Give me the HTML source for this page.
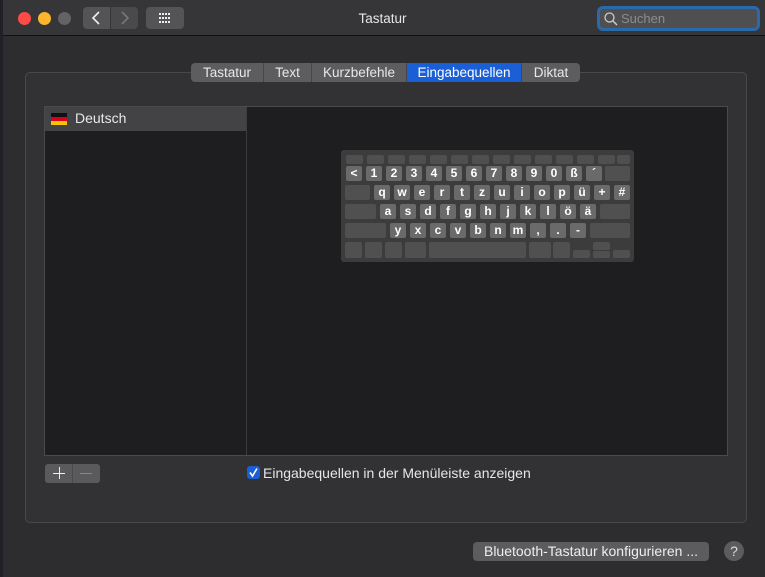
<!DOCTYPE html>
<html><head><meta charset="utf-8"><style>
*{margin:0;padding:0;box-sizing:border-box}
body{width:765px;height:577px;background:#1f2127;font-family:"Liberation Sans",sans-serif;position:relative;overflow:hidden;color:#e0e0e0}
.a{position:absolute}
#win{left:3px;top:0;width:762px;height:577px;background:#2d2d2f}
#title{left:3px;top:0;width:762px;height:36px;background:#363638;border-bottom:1px solid #111}
.dot{width:13px;height:13px;border-radius:50%;top:12px}
.btn{background:#545456;border-radius:4px}
.tab{top:63px;height:19px;background:#5d5d5f;color:#e8e8e8;font-size:13.5px;line-height:19px;text-align:center;border-right:1px solid #47474a}
.k{position:absolute;background:#6a6a6a;border-radius:2px;color:#fff;font-weight:bold;font-size:12px;text-align:center;line-height:15px;width:16px;height:15px}
.p{position:absolute;background:#505050;border-radius:2px}
.f{position:absolute;background:#4f4f4f;border-radius:2px;top:5px;height:9px;width:17px}
</style></head><body>
<div class="a" id="win"></div>
<div class="a" id="title"></div>
<div class="a dot" style="left:18px;background:#fe4b45"></div>
<div class="a dot" style="left:38px;background:#fcb52d"></div>
<div class="a dot" style="left:58px;background:#636366"></div>
<div class="a btn" style="left:83px;top:7px;width:27px;height:22px;border-radius:4px 0 0 4px"></div>
<div class="a btn" style="left:111px;top:7px;width:27px;height:22px;border-radius:0 4px 4px 0;background:#4a4a4c"></div>
<svg class="a" style="left:83px;top:7px" width="55" height="22"><path d="M16 5 L10 11 L16 17" stroke="#eee" stroke-width="1.6" fill="none"/><path d="M39 5 L45 11 L39 17" stroke="#777" stroke-width="1.6" fill="none"/></svg>
<div class="a btn" style="left:146px;top:7px;width:38px;height:22px"></div>
<svg class="a" style="left:146px;top:7px" width="38" height="22"><g fill="#eee"><rect x="13" y="6" width="2" height="2"/><rect x="16" y="6" width="2" height="2"/><rect x="19" y="6" width="2" height="2"/><rect x="22" y="6" width="2" height="2"/><rect x="13" y="10" width="2" height="2"/><rect x="16" y="10" width="2" height="2"/><rect x="19" y="10" width="2" height="2"/><rect x="22" y="10" width="2" height="2"/><rect x="13" y="14" width="2" height="2"/><rect x="16" y="14" width="2" height="2"/><rect x="19" y="14" width="2" height="2"/><rect x="22" y="14" width="2" height="2"/></g></svg>
<div class="a" style="left:0;width:765px;top:11px;text-align:center;font-size:13.5px;color:#e6e6e6">Tastatur</div>
<div class="a" style="left:597px;top:6px;width:163px;height:25px;border:3px solid #2a6aa8;border-radius:6px;background:#4f4f51"></div>
<svg class="a" style="left:603px;top:11px" width="16" height="16"><circle cx="6.5" cy="6.5" r="4.5" stroke="#ccc" stroke-width="1.3" fill="none"/><path d="M10 10 L14 14" stroke="#ccc" stroke-width="1.5"/></svg>
<div class="a" style="left:621px;top:11px;font-size:13px;color:#8c8c8c">Suchen</div>

<div class="a" style="left:25px;top:72px;width:722px;height:451px;border:1px solid #48484a;border-radius:5px;background:#323234"></div>
<div class="a tab" style="left:191px;width:73px;border-radius:4px 0 0 4px">Tastatur</div>
<div class="a tab" style="left:264px;width:48px">Text</div>
<div class="a tab" style="left:312px;width:95px">Kurzbefehle</div>
<div class="a tab" style="left:407px;width:115px;background:#1a5fd6;color:#fff">Eingabequellen</div>
<div class="a tab" style="left:522px;width:58px;border-radius:0 4px 4px 0;border:none">Diktat</div>

<div class="a" style="left:44px;top:106px;width:684px;height:350px;border:1px solid #4a4a4c;background:#1e1e20"></div>
<div class="a" style="left:246px;top:107px;width:1px;height:348px;background:#3c3c3e"></div>
<div class="a" style="left:45px;top:107px;width:201px;height:24px;background:#434345"></div>
<div class="a" style="left:51px;top:113px;width:16px;height:4px;background:#111"></div>
<div class="a" style="left:51px;top:117px;width:16px;height:4px;background:#d8001f"></div>
<div class="a" style="left:51px;top:121px;width:16px;height:4px;background:#f8c600"></div>
<div class="a" style="left:75px;top:110px;font-size:14px;color:#e8e8e8">Deutsch</div>

<div class="a" style="left:341px;top:150px;width:293px;height:112px;background:#3c3c3c;border-radius:3px">
<div class="f" style="left:5px"></div><div class="f" style="left:26px"></div><div class="f" style="left:47px"></div><div class="f" style="left:68px"></div><div class="f" style="left:89px"></div><div class="f" style="left:110px"></div><div class="f" style="left:131px"></div><div class="f" style="left:152px"></div><div class="f" style="left:173px"></div><div class="f" style="left:194px"></div><div class="f" style="left:215px"></div><div class="f" style="left:236px"></div><div class="f" style="left:257px"></div><div class="f" style="left:276px;width:13px"></div>
</div>
<div class="a" style="left:341px;top:150px">
<div class="k" style="left:5px;top:16px">&lt;</div><div class="k" style="left:25px;top:16px">1</div><div class="k" style="left:45px;top:16px">2</div><div class="k" style="left:65px;top:16px">3</div><div class="k" style="left:85px;top:16px">4</div><div class="k" style="left:105px;top:16px">5</div><div class="k" style="left:125px;top:16px">6</div><div class="k" style="left:145px;top:16px">7</div><div class="k" style="left:165px;top:16px">8</div><div class="k" style="left:185px;top:16px">9</div><div class="k" style="left:205px;top:16px">0</div><div class="k" style="left:225px;top:16px">ß</div><div class="k" style="left:245px;top:16px">´</div><div class="p" style="left:264px;top:16px;width:25px;height:15px"></div>
<div class="p" style="left:4px;top:35px;width:25px;height:15px"></div>
<div class="k" style="left:33px;top:35px">q</div><div class="k" style="left:53px;top:35px">w</div><div class="k" style="left:73px;top:35px">e</div><div class="k" style="left:93px;top:35px">r</div><div class="k" style="left:113px;top:35px">t</div><div class="k" style="left:133px;top:35px">z</div><div class="k" style="left:153px;top:35px">u</div><div class="k" style="left:173px;top:35px">i</div><div class="k" style="left:193px;top:35px">o</div><div class="k" style="left:213px;top:35px">p</div><div class="k" style="left:233px;top:35px">ü</div><div class="k" style="left:253px;top:35px">+</div><div class="k" style="left:273px;top:35px">#</div>
<div class="p" style="left:4px;top:54px;width:31px;height:15px"></div>
<div class="k" style="left:39px;top:54px">a</div><div class="k" style="left:59px;top:54px">s</div><div class="k" style="left:79px;top:54px">d</div><div class="k" style="left:99px;top:54px">f</div><div class="k" style="left:119px;top:54px">g</div><div class="k" style="left:139px;top:54px">h</div><div class="k" style="left:159px;top:54px">j</div><div class="k" style="left:179px;top:54px">k</div><div class="k" style="left:199px;top:54px">l</div><div class="k" style="left:219px;top:54px">ö</div><div class="k" style="left:239px;top:54px">ä</div><div class="p" style="left:259px;top:54px;width:30px;height:15px"></div>
<div class="p" style="left:4px;top:73px;width:41px;height:15px"></div>
<div class="k" style="left:49px;top:73px">y</div><div class="k" style="left:69px;top:73px">x</div><div class="k" style="left:89px;top:73px">c</div><div class="k" style="left:109px;top:73px">v</div><div class="k" style="left:129px;top:73px">b</div><div class="k" style="left:149px;top:73px">n</div><div class="k" style="left:169px;top:73px">m</div><div class="k" style="left:189px;top:73px">,</div><div class="k" style="left:209px;top:73px">.</div><div class="k" style="left:229px;top:73px">-</div><div class="p" style="left:249px;top:73px;width:40px;height:15px"></div>
<div class="p" style="left:4px;top:92px;width:17px;height:16px"></div><div class="p" style="left:24px;top:92px;width:17px;height:16px"></div><div class="p" style="left:44px;top:92px;width:17px;height:16px"></div><div class="p" style="left:64px;top:92px;width:21px;height:16px"></div><div class="p" style="left:88px;top:92px;width:97px;height:16px"></div><div class="p" style="left:188px;top:92px;width:22px;height:16px"></div><div class="p" style="left:212px;top:92px;width:17px;height:16px"></div><div class="p" style="left:232px;top:100px;width:17px;height:8px"></div><div class="p" style="left:252px;top:92px;width:17px;height:8px"></div><div class="p" style="left:252px;top:101px;width:17px;height:7px"></div><div class="p" style="left:272px;top:100px;width:17px;height:8px"></div>
</div>

<div class="a" style="left:45px;top:464px;width:55px;height:19px;background:#5a5a5c;border-radius:3px"></div>
<div class="a" style="left:72px;top:464px;width:1px;height:19px;background:#4a4a4c"></div>
<div class="a" style="left:53px;top:473px;width:12px;height:1.2px;background:#eee"></div>
<div class="a" style="left:58.5px;top:467px;width:1.2px;height:12px;background:#eee"></div>
<div class="a" style="left:80px;top:473px;width:12px;height:1px;background:#888"></div>
<div class="a" style="left:247px;top:466px;width:13px;height:13px;background:#1a5fd6;border-radius:3px"></div>
<svg class="a" style="left:247px;top:466px" width="13" height="13"><path d="M3 6.5 L5.5 10 L10 2.5" stroke="#fff" stroke-width="1.6" fill="none"/></svg>
<div class="a" style="left:263px;top:465px;font-size:14px;color:#e6e6e6">Eingabequellen in der Menüleiste anzeigen</div>

<div class="a" style="left:473px;top:542px;width:236px;height:19px;background:#5c5c5e;border-radius:4px;text-align:center;font-size:14px;line-height:19px;color:#eee">Bluetooth-Tastatur konfigurieren ...</div>
<div class="a" style="left:724px;top:541px;width:20px;height:20px;border-radius:50%;background:#5c5c5e;text-align:center;font-size:14px;line-height:20px;color:#ddd">?</div>
</body></html>
